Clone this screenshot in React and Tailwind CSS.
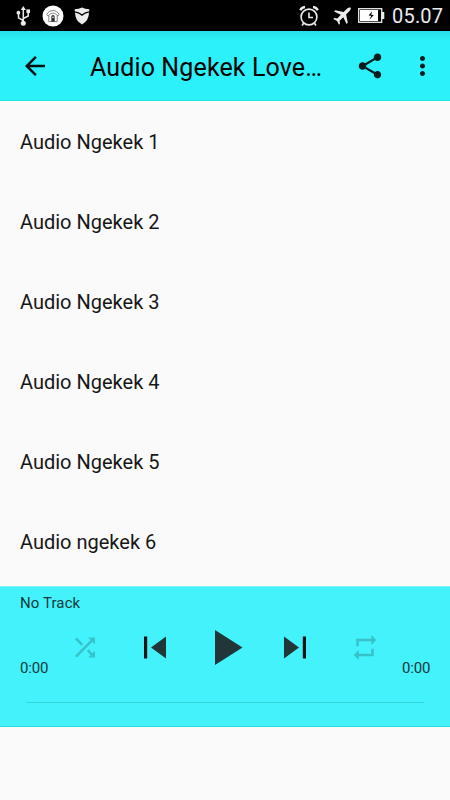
import React from 'react';

const tracks = [
  'Audio Ngekek 1',
  'Audio Ngekek 2',
  'Audio Ngekek 3',
  'Audio Ngekek 4',
  'Audio Ngekek 5',
  'Audio ngekek 6',
];

function Icon({ d, className = 'w-[30px] h-[30px]' }) {
  return (
    <svg viewBox="0 0 24 24" fill="currentColor" className={`shrink-0 ${className}`}>
      <path d={d} />
    </svg>
  );
}

function StatusBar() {
  return (
    <div className="flex h-[31px] items-center justify-between bg-black pl-4 pr-[7px] text-[#ececec]">
      <div className="flex items-center">
        {/* USB */}
        <svg viewBox="0 0 15 20" className="h-5 w-[15px]" fill="none" stroke="currentColor" strokeWidth="1.5">
          <path d="M7.3 17V3M7.3 14.5L2.5 11.8V7M7.3 12.5L12.2 10V5" />
          <path d="M7.3 0L9.8 4H4.8z" fill="currentColor" stroke="none" />
          <circle cx="7.3" cy="17.3" r="2.5" fill="currentColor" stroke="none" />
          <circle cx="2.4" cy="6.7" r="1.9" fill="currentColor" stroke="none" />
          <path d="M10.4 3.4h3.6v3.6h-3.6z" fill="currentColor" stroke="none" />
        </svg>
        {/* Home badge */}
        <svg viewBox="0 0 22 22" className="ml-[11px] h-[22px] w-[22px]" fill="none">
          <circle cx="11" cy="11" r="10.5" fill="#fff" />
          <path d="M4.7 9.6C7.5 4.2 14.5 4.2 17.3 9.6L15.8 11C13.5 7.2 8.5 7.2 6.2 11z" stroke="#777" strokeWidth=".9" />
          <path d="M6.8 10.5V16.6h8.4v-6.1" stroke="#777" strokeWidth=".9" />
          <path d="M9.3 16.8v-5a1.7 1.7 0 0 1 3.4 0v5z" fill="#333" />
          <circle cx="11" cy="12.3" r=".8" fill="#fff" />
        </svg>
        {/* Shield */}
        <svg viewBox="0 0 16 18" className="ml-[10px] h-[18px] w-4" fill="currentColor">
          <path d="M.7 2.2Q5 2 8 .4Q11 2 15.3 2.2V4.2Q11 4.6 8 7.2Q5 4.6 .7 4.2z" />
          <path d="M1 5.6Q5.2 6.2 8 9.1Q10.8 6.2 15 5.6Q15 13.8 8 17.4Q1 13.8 1 5.6z" />
        </svg>
      </div>
      <div className="flex items-center">
        {/* Alarm */}
        <svg viewBox="0 0 20 22" className="h-[22px] w-5" fill="none" stroke="currentColor" strokeWidth="1.6">
          <circle cx="10" cy="12" r="7.9" />
          <path d="M10 7.5V12.5H14" />
          <path d="M1.3 5.3Q2.5 2.3 6 2M14 2Q17.5 2.3 18.7 5.3" strokeWidth="2.4" />
          <path d="M4.8 18L3 20.5M15.2 18L17 20.5" />
        </svg>
        {/* Airplane */}
        <svg viewBox="0 0 18 18" className="ml-[14px] h-[18px] w-[18px]" fill="currentColor">
          <path d="M17.6.6Q16-.1 14.2 1.5L10.6 4.9L2.3 3.2L1.1 4.4L7.8 7.7L4.3 11.4L1.3 11L.3 12L4 14L6 17.7L7 16.7L6.6 13.7L10.3 10.2L13.6 16.9L14.8 15.7L13.1 7.4L16.5 4Q18.3 2.2 17.6.6z" />
        </svg>
        {/* Battery */}
        <svg viewBox="0 0 27 15" className="ml-[7px] h-[15px] w-[27px]">
          <rect x=".7" y=".7" width="23" height="13.6" fill="none" stroke="currentColor" strokeWidth="1.3" />
          <path d="M24 4h2.3v7H24z" fill="currentColor" />
          <path d="M2 2h18v11H2z" fill="#fff" />
          <path d="M14 3.2L10.6 7.5l2.6.3-1.7 4L15.8 7l-2.6-.3z" fill="#000" />
        </svg>
        <span className="ml-[7px] w-[51px] whitespace-nowrap font-['Roboto',sans-serif] text-[20px] leading-none tracking-[0.2px]">
          05.07
        </span>
      </div>
    </div>
  );
}

function Toolbar() {
  return (
    <header className="flex h-[70px] items-center border-b border-[#24e4ec] bg-[linear-gradient(#28dfe8,#2cf1fa_10px)] pl-5 pr-3 text-[#021012]">
      <Icon d="M20 11H7.83l5.59-5.59L12 4l-8 8 8 8 1.41-1.41L7.83 13H20v-2z" />
      <h1 className="ml-10 w-[245px] whitespace-nowrap pt-[3px] text-[25px] leading-none tracking-[0.13px] text-black">
        Audio Ngekek Love…
      </h1>
      <Icon
        className="ml-5 h-[30px] w-[30px] text-[#061d1f]"
        d="M18 16.08c-.76 0-1.44.3-1.96.77L8.91 12.7c.05-.23.09-.46.09-.7s-.04-.47-.09-.7l7.05-4.11c.54.5 1.25.81 2.04.81 1.66 0 3-1.34 3-3s-1.34-3-3-3-3 1.34-3 3c0 .24.04.47.09.7L8.04 9.81C7.5 9.31 6.79 9 6 9c-1.66 0-3 1.34-3 3s1.34 3 3 3c.79 0 1.5-.31 2.04-.81l7.12 4.16c-.05.21-.08.43-.08.65 0 1.61 1.31 2.92 2.92 2.92 1.61 0 2.92-1.31 2.92-2.92s-1.31-2.92-2.92-2.92z"
      />
      <Icon
        className="ml-[22px] h-[30px] w-[30px] text-[#061d1f]"
        d="M12.4 8c1.1 0 2-.9 2-2s-.9-2-2-2-2 .9-2 2 .9 2 2 2zm0 2c-1.1 0-2 .9-2 2s.9 2 2 2 2-.9 2-2-.9-2-2-2zm0 6c-1.1 0-2 .9-2 2s.9 2 2 2 2-.9 2-2-.9-2-2-2z"
      />
    </header>
  );
}

function Player() {
  return (
    <section className="h-[141px] border-b border-t border-b-[#25dce5] border-t-[#7ff4f9] bg-[#43f2fa] text-[#15383b]">
      <div className="flex h-[31px] items-center pl-5 pt-px text-[15px] leading-none tracking-[0.1px]">No Track</div>
      <div className="flex h-[58px] items-center">
        <span className="w-[50px] self-end pl-5 text-[15px] leading-none tracking-[-0.2px]">0:00</span>
        <div className="grid w-[350px] translate-y-[0.5px] grid-cols-5 place-items-center">
          <Icon
            className="h-[30px] w-[30px] text-[#36c2c8]"
            d="M10.59 9.17L5.41 4 4 5.41l5.17 5.17 1.42-1.41zM14.5 4l2.04 2.04L4 18.59 5.41 20 17.96 7.46 20 9.5V4h-5.5zm.33 9.41l-1.41 1.41 3.13 3.13L14.5 20H20v-5.5l-2.04 2.04-3.13-3.13z"
          />
          <svg viewBox="0 0 30 30" className="h-[30px] w-[30px]">
            <path d="M4 4h3.2v22H4z" fill="#141414" />
            <path d="M26 4v22L11 15z" fill="#203638" />
          </svg>
          <Icon className="h-[60px] w-[60px] text-[#203638]" d="M8 5v14l11-7z" />
          <svg viewBox="0 0 30 30" className="h-[30px] w-[30px]">
            <path d="M22.8 4H26v22h-3.2z" fill="#141414" />
            <path d="M4 4v22l15-11z" fill="#203638" />
          </svg>
          <Icon
            className="h-[30px] w-[30px] text-[#36c2c8]"
            d="M7 7h10v3l4-4-4-4v3H5v6h2V7zm10 10H7v-3l-4 4 4 4v-3h12v-6h-2v4z"
          />
        </div>
        <span className="w-[50px] self-end pl-0.5 text-[15px] leading-none tracking-[-0.2px]">0:00</span>
      </div>
      {/* Seek bar */}
      <div className="mx-[26px] mt-[26px] h-px bg-[#38d5dc]" />
    </section>
  );
}

export default function App() {
  return (
    <div className="flex h-[800px] w-[450px] flex-col overflow-hidden bg-[#fafafa] font-['Roboto',sans-serif]">
      <StatusBar />
      <Toolbar />
      <ul className="h-[485px] overflow-hidden">
        {tracks.map((track) => (
          <li key={track} className="flex h-20 items-center pl-5 pt-0.5 text-[20px] leading-none text-[#171717]">
            {track}
          </li>
        ))}
      </ul>
      <Player />
    </div>
  );
}
